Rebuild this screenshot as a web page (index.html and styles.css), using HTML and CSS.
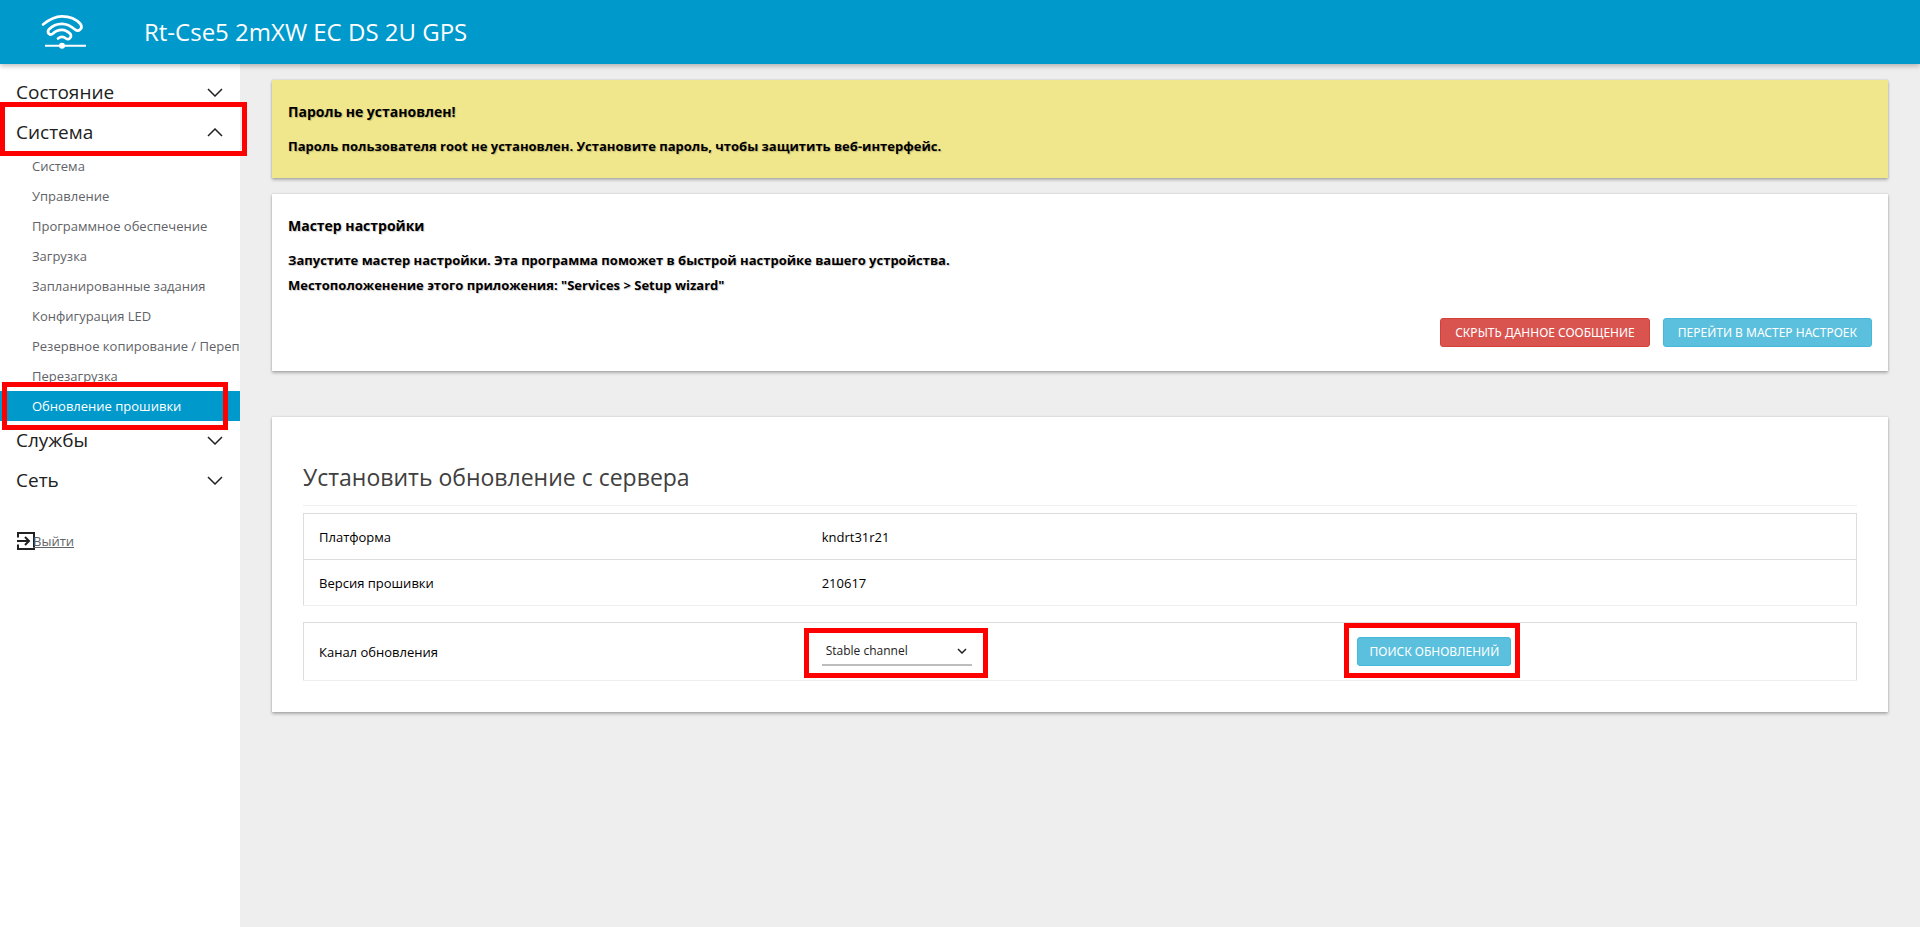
FILE: index.html
```html
<!DOCTYPE html>
<html lang="ru">
<head>
<meta charset="utf-8">
<title>Обновление прошивки</title>
<link rel="stylesheet" href="styles.css">
</head>
<body>
<header class="topbar">
  <svg class="logo" viewBox="0 -3 70 60" fill="none" stroke="#fff" stroke-width="2.700" stroke-linecap="round" aria-hidden="true">
    <path d="M13 19.500C19 14.500 25 11.300 32 11.300C40 11.300 47 15 50.500 19C53.500 23.500 48.500 27.500 45 24.500C41 21 37 18.800 32 18.800C26 18.800 22 21 18.800 24.500C16.500 28 20 31 23 28.500C26 25.500 28 24.800 32 24.800C36 24.800 38 26.500 40.500 29C42 32 39 35.500 36 33.500C33.500 31.500 30.500 31.500 28 33.500"/>
    <path d="M15 40.700H56" stroke-width="2" stroke-linecap="butt"/>
    <circle cx="32" cy="40.700" r="3" fill="#fff" stroke="none"/>
  </svg>
  <span class="brand">Rt-Cse5 2mXW EC DS 2U GPS</span>
</header>
<div class="layout">
  <nav class="sidebar">
    <ul class="menu">
      <li><button class="section" type="button">Состояние<svg class="chevron" viewBox="0 0 16 9"><path d="M1 1L8 8L15 1"/></svg></button></li>
      <li>
        <button class="section marked mark-section" type="button" aria-expanded="true">Система<svg class="chevron" viewBox="0 0 16 9"><path d="M1 8L8 1L15 8"/></svg></button>
        <ul class="submenu">
          <li><a href="#">Система</a></li>
          <li><a href="#">Управление</a></li>
          <li><a href="#">Программное обеспечение</a></li>
          <li><a href="#">Загрузка</a></li>
          <li><a href="#">Запланированные задания</a></li>
          <li><a href="#">Конфигурация LED</a></li>
          <li><a href="#">Резервное копирование / Перепрошивка</a></li>
          <li><a href="#">Перезагрузка</a></li>
          <li class="marked mark-item"><a class="active" href="#">Обновление прошивки</a></li>
        </ul>
      </li>
      <li><button class="section" type="button">Службы<svg class="chevron" viewBox="0 0 16 9"><path d="M1 1L8 8L15 1"/></svg></button></li>
      <li><button class="section" type="button">Сеть<svg class="chevron" viewBox="0 0 16 9"><path d="M1 1L8 8L15 1"/></svg></button></li>
    </ul>
    <a class="logout" href="#"><svg class="logout-icon" viewBox="0 0 18 18"><path d="M1 5.500V1H17V17H1V12.500M0 9H12M8 5L12 9L8 13"/></svg>Выйти</a>
  </nav>
  <main class="content">
    <section class="card notice warning">
      <h4>Пароль не установлен!</h4>
      <p>Пароль пользователя root не установлен. Установите пароль, чтобы защитить веб-интерфейс.</p>
    </section>
    <section class="card notice">
      <h4>Мастер настройки</h4>
      <p>Запустите мастер настройки. Эта программа поможет в быстрой настройке вашего устройства.<br>Местоположенение этого приложения: "Services &gt; Setup wizard"</p>
      <div class="actions">
        <button class="btn danger" type="button">СКРЫТЬ ДАННОЕ СООБЩЕНИЕ</button>
        <button class="btn info" type="button">ПЕРЕЙТИ В МАСТЕР НАСТРОЕК</button>
      </div>
    </section>
    <section class="card update">
      <h2>Установить обновление с сервера</h2>
      <table class="grid">
        <colgroup><col class="c-name"><col class="c-value"><col></colgroup>
        <tbody>
          <tr><td>Платформа</td><td>kndrt31r21</td><td></td></tr>
          <tr><td>Версия прошивки</td><td>210617</td><td></td></tr>
        </tbody>
      </table>
      <table class="grid tall">
        <colgroup><col class="c-name"><col class="c-value"><col></colgroup>
        <tbody>
          <tr>
            <td><label for="channel">Канал обновления</label></td>
            <td><span class="select marked mark-select"><select id="channel"><option>Stable channel</option></select><svg class="caret" viewBox="0 0 10 6"><path d="M1 1L5 5L9 1"/></svg></span></td>
            <td><span class="marked mark-button"><button class="btn info compact" type="button">ПОИСК ОБНОВЛЕНИЙ</button></span></td>
          </tr>
        </tbody>
      </table>
    </section>
  </main>
</div>
</body>
</html>
```
FILE: styles.css
```css
* {
  box-sizing: border-box;
}

body {
  margin: 0;
  min-height: 100vh;
  display: flex;
  flex-direction: column;
  background: #eee;
  color: #000;
  font: 13px/20px "Open Sans", "Noto Sans", sans-serif;
}

ul {
  margin: 0;
  padding: 0;
  list-style: none;
}

.topbar {
  position: relative;
  z-index: 1;
  display: flex;
  align-items: center;
  gap: 44px;
  height: 64px;
  padding-left: 30px;
  background: #0099cc;
  color: #fff;
  box-shadow: 0 2px 5px rgba(0, 0, 0, .26);
}

.logo {
  width: 70px;
  height: 60px;
}

.brand {
  font-size: 24px;
  line-height: 32px;
}

.layout {
  flex: 1;
  display: flex;
}

.sidebar {
  flex: 0 0 240px;
  min-width: 0;
  padding-top: 8px;
  background: #fff;
}

.section {
  display: flex;
  align-items: center;
  justify-content: space-between;
  width: 100%;
  height: 40px;
  padding: 0 17px 0 16px;
  border: 0;
  background: none;
  color: #212121;
  font: inherit;
  font-size: 19px;
}

.chevron {
  width: 16px;
  height: 9px;
  fill: none;
  stroke: #212121;
  stroke-width: 1.5;
}

.submenu {
  margin: -1px 0;
}

.submenu a {
  display: block;
  overflow: hidden;
  height: 30px;
  padding-left: 32px;
  color: #5f6368;
  line-height: 30px;
  text-decoration: none;
  white-space: nowrap;
}

.submenu .active {
  background: #0099cc;
  color: #fff;
}

.logout {
  display: inline-flex;
  align-items: center;
  margin: 31px 0 0 17px;
  color: #5f6368;
}

.logout-icon {
  width: 18px;
  height: 18px;
  margin-right: -2px;
  fill: none;
  stroke: #212121;
  stroke-width: 2;
}

.content {
  flex: 1;
  min-width: 0;
  padding: 16px 32px;
}

.card {
  margin-bottom: 16px;
  background: #fff;
  box-shadow: 0 2px 3px rgba(0, 0, 0, .26), 0 0 2px rgba(0, 0, 0, .16);
}

.notice {
  padding: 20px 16px 19px;
  font-weight: 700;
  line-height: 25px;
  text-shadow: 1px 1px 1px rgba(0, 0, 0, .2);
}

.notice h4 {
  margin: 0 0 10px;
  font-size: 14px;
  line-height: 24px;
}

.notice p {
  margin: 0;
}

.warning {
  background: #f0e68c;
}

.actions {
  display: flex;
  justify-content: flex-end;
  gap: 13px;
  padding: 20px 0 5px;
}

.btn {
  height: 29px;
  padding: 0 14px;
  border: 1px solid;
  border-radius: 3px;
  color: #fff;
  font: 12px/16px "Noto Sans", sans-serif;
}

.compact {
  padding: 0 11px;
}

.danger {
  border-color: #d43f3a;
  background: #d9534f;
}

.info {
  border-color: #46b8da;
  background: #5bc0de;
}

.update {
  margin-top: 46px;
  padding: 40px 31px 31px;
}

.update h2 {
  margin: 0 0 7px;
  padding-bottom: 8px;
  border-bottom: 1px solid #eee;
  color: #404040;
  font-size: 23px;
  font-weight: 400;
  line-height: 40px;
}

.grid {
  width: 100%;
  table-layout: fixed;
  border-collapse: collapse;
  border: 1px solid #ddd;
  border-bottom-color: #eee;
}

.grid + .grid {
  margin-top: 16px;
}

.c-name {
  width: 32.4%;
}

.c-value {
  width: 34.5%;
}

.grid td {
  height: 46px;
  padding: 0 15px;
  border-top: 1px solid #ddd;
}

.tall td {
  height: 58px;
}

.select {
  display: inline-flex;
  align-items: center;
  width: 150px;
  height: 28px;
  border-bottom: 2px solid #bdbdbd;
}

.select select {
  width: 100%;
  height: 26px;
  padding: 0 4px;
  border: 0;
  background: none;
  color: #212121;
  font: inherit;
  font-size: 12px;
  appearance: none;
}

.caret {
  width: 10px;
  height: 6px;
  margin: 0 5px 0 -15px;
  fill: none;
  stroke: #212121;
  stroke-width: 1.5;
  pointer-events: none;
}

.marked {
  position: relative;
}

.mark-button {
  display: inline-block;
}

.marked::after {
  content: "";
  position: absolute;
  z-index: 2;
  border: 5px solid #f00;
  pointer-events: none;
}

.mark-section::after {
  inset: -10px -7px -4px 0;
}

.mark-item::after {
  inset: -9px 12px -9px 2px;
}

.mark-select::after {
  inset: -10px -16px -14px -18px;
}

.mark-button::after {
  inset: -14px -9px -12px -13px;
}
```
